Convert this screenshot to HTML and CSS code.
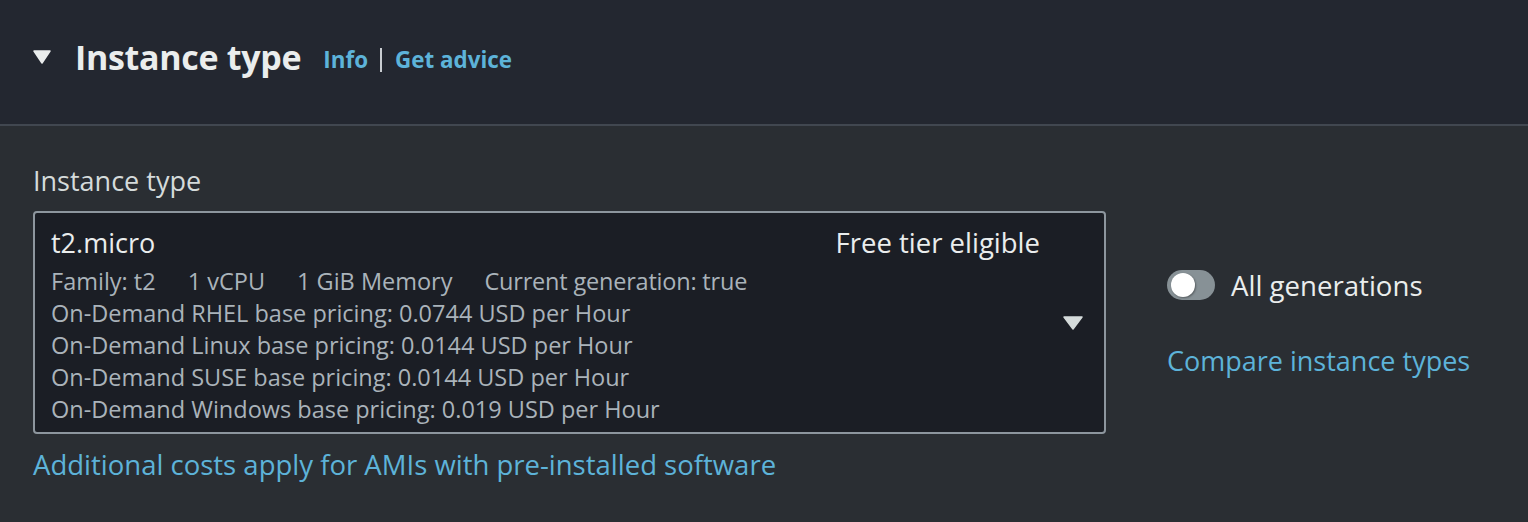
FILE: index.html
```html
<!DOCTYPE html>
<html>
<head>
<meta charset="utf-8">
<link rel="stylesheet" href="styles.css">
</head>
<body>
<div class="panel">
  <div class="header">
    <svg class="caret" width="18" height="14" viewBox="0 0 18 14"><path d="M1 1 H17 L9 13 Z" fill="#eaeded" stroke="#eaeded" stroke-width="1.5" stroke-linejoin="round"/></svg>
    <h2 class="title">Instance type</h2>
    <a class="hlink">Info</a>
    <span class="sep"></span>
    <a class="hlink">Get advice</a>
  </div>
  <div class="body">
    <div class="label">Instance type</div>
    <div class="row">
      <div class="select">
        <div class="sel-main">
          <div class="sel-top">
            <span class="sel-name">t2.micro</span>
            <span class="sel-tag">Free tier eligible</span>
          </div>
          <div class="sel-line tags"><span>Family: t2</span><span>1 vCPU</span><span>1 GiB Memory</span><span>Current generation: true</span></div>
          <div class="sel-line">On-Demand RHEL base pricing: 0.0744 USD per Hour</div>
          <div class="sel-line">On-Demand Linux base pricing: 0.0144 USD per Hour</div>
          <div class="sel-line">On-Demand SUSE base pricing: 0.0144 USD per Hour</div>
          <div class="sel-line">On-Demand Windows base pricing: 0.019 USD per Hour</div>
        </div>
        <svg class="sel-caret" width="22" height="16" viewBox="0 0 22 16"><path d="M2 2 H20 L11 14 Z" fill="#d5dbdb" stroke="#d5dbdb" stroke-width="1.5" stroke-linejoin="round"/></svg>
      </div>
      <div class="side">
        <div class="toggle-row">
          <span class="toggle"><span class="knob"></span></span>
          <span class="toggle-label">All generations</span>
        </div>
        <a class="link">Compare instance types</a>
      </div>
    </div>
    <a class="link note">Additional costs apply for AMIs with pre-installed software</a>
  </div>
</div>
</body>
</html>
```

FILE: styles.css
```css
html, body {
  margin: 0;
  padding: 0;
  background: #2a2e33;
}
body {
  font-family: "Open Sans", "Noto Sans", sans-serif;
  color: #eaeded;
  width: 1528px;
  height: 522px;
  overflow: hidden;
}
.panel {
  background: #2a2e33;
}
.header {
  height: 114px;
  padding-bottom: 10px;
  background: #232730;
  border-bottom: 2px solid #414750;
  display: flex;
  align-items: center;
  padding-left: 33px;
  box-sizing: content-box;
}
.caret {
  margin-right: 24px;
  margin-top: 0;
}
.title {
  margin: 0;
  font-size: 34px;
  font-weight: 700;
  letter-spacing: -0.3px;
  color: #eaeded;
  margin-right: 22px;
}
.hlink {
  color: #5db3d9;
  font-weight: 700;
  font-size: 22.4px;
  margin-top: 4px;
}
.sep {
  width: 2px;
  height: 24px;
  background: #c9cdd1;
  margin: 6px 13px 0 12px;
}
.body {
  padding: 38px 33px 0 33px;
}
.label {
  font-size: 27px;
  line-height: 34px;
  color: #d5dbdb;
  margin-bottom: 13px;
}
.row {
  display: flex;
  align-items: flex-start;
}
.select {
  width: 1069px;
  height: 219px;
  border: 2px solid #8d969e;
  border-radius: 4px;
  background: #1b1e25;
  display: flex;
  align-items: center;
  box-sizing: content-box;
}
.sel-main {
  flex: 1;
  padding: 12px 0 0 16px;
  align-self: flex-start;
}
.sel-top {
  display: flex;
  justify-content: space-between;
  font-size: 27px;
  line-height: 36px;
  color: #eaeded;
  margin-bottom: 4px;
}
.sel-tag {
  font-size: 27.5px;
  margin-right: 2px;
}
.sel-line {
  font-size: 23.5px;
  line-height: 32px;
  color: #aab3ba;
}
.tags span {
  margin-right: 32px;
}
.tags span:last-child {
  letter-spacing: -0.2px;
}
.sel-caret {
  margin: 0 20px 0 20px;
}
.side {
  margin-left: 61px;
  padding-top: 55px;
  display: flex;
  flex-direction: column;
}
.toggle-row {
  display: flex;
  align-items: center;
}
.toggle {
  width: 48px;
  height: 30px;
  border-radius: 15px;
  background: #879196;
  display: inline-block;
  position: relative;
  margin-right: 16px;
}
.knob {
  position: absolute;
  left: 4px;
  top: 3px;
  width: 24px;
  height: 24px;
  border-radius: 50%;
  background: #ffffff;
  box-shadow: 1px 1px 2px rgba(0,0,0,0.35);
}
.toggle-label {
  font-size: 27.6px;
  color: #eaeded;
}
.link {
  color: #5db3d9;
  font-size: 27.5px;
  text-decoration: none;
}
.side .link {
  margin-top: 38px;
  font-size: 27px;
}
.note {
  display: block;
  margin-top: 12px;
}
```
